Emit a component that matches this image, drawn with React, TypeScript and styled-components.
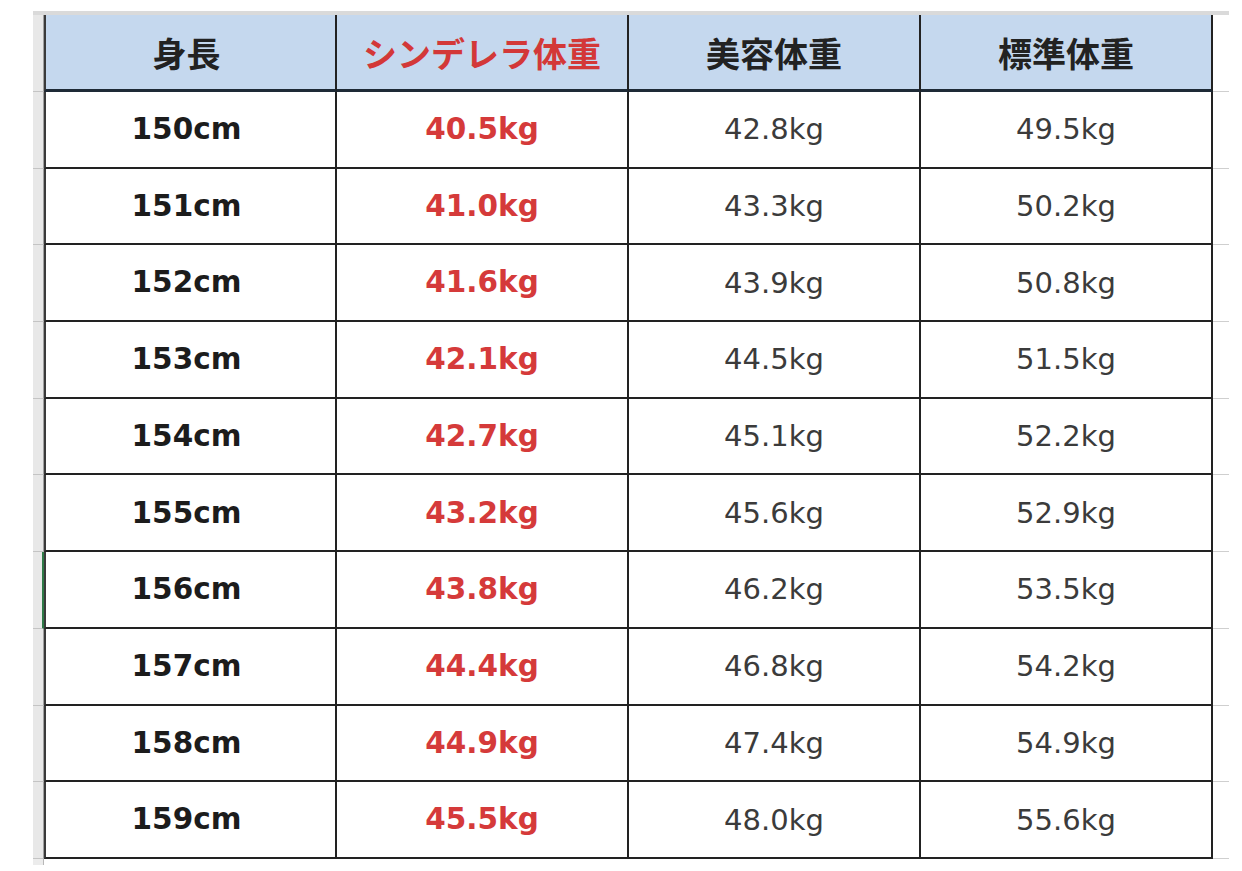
import React from 'react';
import styled, { createGlobalStyle } from 'styled-components';

const GlobalStyle = createGlobalStyle`
  html, body {
    margin: 0;
    padding: 0;
    background: #ffffff;
  }
  body {
    font-family: 'DejaVu Sans', 'Noto Sans CJK JP', sans-serif;
  }
`;

const Page = styled.div`
  width: 1242px;
  height: 871px;
  padding: 11px 0 0 33px;
  box-sizing: border-box;
  background: #ffffff;
`;

const Sheet = styled.div`
  display: grid;
  grid-template-columns: 11px 293px 292px 292px 292px 16px;
  grid-template-rows: 77px repeat(10, 76.7px) 6px;
  width: 1196px;
  border-top: 4px solid #dadada;
  box-sizing: content-box;
`;

const RowHead = styled.div<{ $selected?: boolean }>`
  background: #e8e8e8;
  border-right: 1px solid #a0a0a0;
  border-bottom: 1px solid #c4c4c4;
  box-sizing: border-box;
  ${(p) => (p.$selected ? 'border-right: 2px solid #2f7a47;' : '')}
`;

const Tail = styled.div`
  border-bottom: 1px solid #cfcfcf;
  box-sizing: border-box;
`;

const Cell = styled.div<{ $first?: boolean; $header?: boolean }>`
  display: flex;
  align-items: center;
  justify-content: center;
  box-sizing: border-box;
  border-right: 2px solid #222222;
  border-bottom: 2px solid #222222;
  ${(p) => (p.$first ? 'border-left: 2px solid #3a3a3a; padding-right: 8px;' : '')}
  background: ${(p) => (p.$header ? '#c5d8ee' : '#ffffff')};
  ${(p) => (p.$header ? 'border-bottom-width: 3px; border-bottom-color: #1e2a36;' : '')}
`;

const HeadText = styled.span<{ $red?: boolean }>`
  font-family: 'Noto Sans CJK JP', sans-serif;
  font-weight: 700;
  font-size: 34px;
  line-height: 1;
  color: ${(p) => (p.$red ? '#d33838' : '#222222')};
  padding-top: 2px;
`;

const Value = styled.span<{ $tone: 'height' | 'red' | 'plain' }>`
  font-family: 'DejaVu Sans', sans-serif;
  font-size: ${(p) => (p.$tone === 'plain' ? '29px' : '29.5px')};
  font-weight: ${(p) => (p.$tone === 'plain' ? 400 : 700)};
  color: ${(p) =>
    p.$tone === 'red' ? '#d53a3a' : p.$tone === 'height' ? '#1c1c1c' : '#3b3b3b'};
  line-height: 1;
  padding-top: 1px;
`;

const StripEnd = styled.div`
  background: #ececec;
  border-right: 1px solid #b8b8b8;
`;

const headers = ['身長', 'シンデレラ体重', '美容体重', '標準体重'];

const rows = [
  ['150cm', '40.5kg', '42.8kg', '49.5kg'],
  ['151cm', '41.0kg', '43.3kg', '50.2kg'],
  ['152cm', '41.6kg', '43.9kg', '50.8kg'],
  ['153cm', '42.1kg', '44.5kg', '51.5kg'],
  ['154cm', '42.7kg', '45.1kg', '52.2kg'],
  ['155cm', '43.2kg', '45.6kg', '52.9kg'],
  ['156cm', '43.8kg', '46.2kg', '53.5kg'],
  ['157cm', '44.4kg', '46.8kg', '54.2kg'],
  ['158cm', '44.9kg', '47.4kg', '54.9kg'],
  ['159cm', '45.5kg', '48.0kg', '55.6kg'],
];

const tones: Array<'height' | 'red' | 'plain'> = ['height', 'red', 'plain', 'plain'];

const App: React.FC = () => (
  <Page>
    <GlobalStyle />
    <Sheet>
      <RowHead />
      {headers.map((h, i) => (
        <Cell key={h} $header $first={i === 0}>
          <HeadText $red={i === 1}>{h}</HeadText>
        </Cell>
      ))}
      <Tail />
      {rows.map((row, r) => (
        <React.Fragment key={row[0]}>
          <RowHead $selected={r === 6} />
          {row.map((v, i) => (
            <Cell key={i} $first={i === 0}>
              <Value $tone={tones[i]}>{v}</Value>
            </Cell>
          ))}
          <Tail />
        </React.Fragment>
      ))}
      <StripEnd />
    </Sheet>
  </Page>
);

export default App;
